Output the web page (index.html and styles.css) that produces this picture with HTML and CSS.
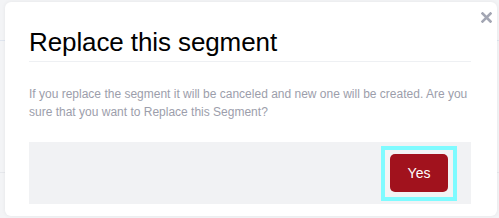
FILE: index.html
```html
<!DOCTYPE html>
<html lang="en">
<head>
    <meta charset="UTF-8">
    <meta name="viewport" content="width=device-width, initial-scale=1.0">
    <title>Replace this segment</title>
    <link rel="stylesheet" href="styles.css">
</head>
<body>
    <div class="page">
        <div class="page-header"></div>
        <div class="page-row"></div>
    </div>

    <div class="modal">
        <button class="modal-close" aria-label="Close">
            <svg width="11" height="11" viewBox="0 0 11 11">
                <path d="M1.5 1.5 L9.5 9.5 M9.5 1.5 L1.5 9.5" stroke="#a3a6b3" stroke-width="2.6" stroke-linecap="square"/>
            </svg>
        </button>
        <h2 class="modal-title">Replace this segment</h2>
        <p class="modal-text">If you replace the segment it will be canceled and new one will be created. Are you sure that you want to Replace this Segment?</p>
        <div class="modal-footer">
            <div class="focus-ring">
                <button class="btn-yes">Yes</button>
            </div>
        </div>
    </div>
</body>
</html>
```

FILE: styles.css
```css
html, body {
    margin: 0;
    padding: 0;
}
body {
    background-color: #f3f4f6;
    font-family: "Liberation Sans", Arial, sans-serif;
    width: 499px;
    height: 218px;
    overflow: hidden;
    position: relative;
}
.page-header {
    height: 40px;
    border-bottom: 1px solid #dfe5ef;
}
.page-row {
    height: 131px;
    border-bottom: 1px solid #e6e8ec;
}
.modal {
    position: absolute;
    top: 2px;
    left: 5px;
    width: 492px;
    height: 214px;
    box-sizing: border-box;
    background-color: #fff;
    border-radius: 6px;
    box-shadow: 0 0 4px rgba(0, 0, 0, 0.06);
    padding: 25px 26px 11px 24px;
}
.modal-close {
    position: absolute;
    top: 10px;
    right: 5px;
    width: 11px;
    height: 11px;
    padding: 0;
    border: none;
    background: none;
    display: flex;
}
.modal-title {
    margin: 0;
    font-size: 26px;
    font-weight: normal;
    line-height: 30px;
    color: #000;
    letter-spacing: -0.1px;
    padding-bottom: 4px;
    border-bottom: 1px solid #eef0f3;
}
.modal-text {
    margin: 23px 0 0;
    font-size: 12px;
    line-height: 18px;
    color: #9c9eab;
}
.modal-footer {
    margin-top: 21px;
    height: 62px;
    box-sizing: border-box;
    background-color: #f1f2f4;
    padding: 4px 14px 3px 0;
    display: flex;
    justify-content: flex-end;
    align-items: flex-start;
}
.focus-ring {
    border: 4px solid #7ffbff;
    padding: 4px 5px 5px;
    background-color: #f3f3f4;
    display: flex;
}
.btn-yes {
    height: 38px;
    width: 58px;
    background-color: #a1121d;
    color: #fff;
    border: none;
    border-radius: 5px;
    font-family: "Liberation Sans", Arial, sans-serif;
    font-size: 14px;
    outline: none;
    cursor: pointer;
}
```
